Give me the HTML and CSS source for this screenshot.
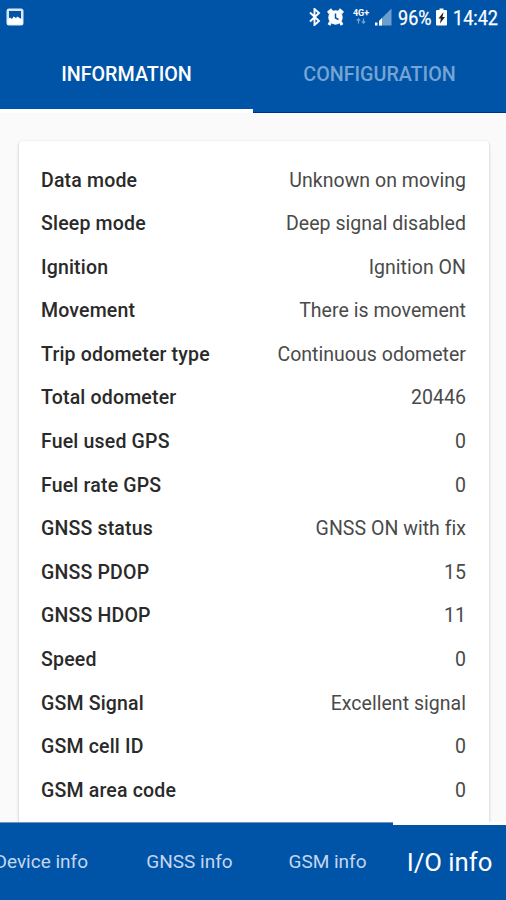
FILE: index.html
```
<!DOCTYPE html>
<html lang="en">
<head>
<meta charset="utf-8">
<meta name="viewport" content="width=device-width">
<title>I/O info</title>
<link rel="stylesheet" href="styles.css">
</head>
<body>
<div class="screen">
  <header class="status">
    <svg class="picture" width="18" height="18" viewBox="0 0 18 18"><rect x=".5" y=".5" width="17" height="17" rx="2.500" fill="#d9e6f8"/><path d="M3 3h12v8H3z" fill="#0054a8"/><path d="M1.500 11.500L4 9.500l2 1.500L7.500 8.500 10 10l1.500-1.500 2 1.500 3 1.500v5h-15z" fill="#fff"/></svg>
    <div class="indicators">
      <svg class="bluetooth" width="12" height="18" viewBox="0 0 12 18"><path d="M1 4.500l9 8.500-4.500 4V1L10 5 1 13.500" fill="none" stroke="#fff" stroke-width="1.900"/></svg>
      <svg class="alarm" width="17" height="18" viewBox="0 0 17 18"><path d="M1 5l4-3.500M16 5l-4-3.500M3.500 14L2 17M13.500 14l1.500 3" stroke="#fff" stroke-width="3"/><circle cx="8.500" cy="9.500" r="7.200" fill="#fff"/><path d="M8.500 5.500v4.500l3 1.500" fill="none" stroke="#0054a8" stroke-width="1.500"/></svg>
      <div class="network"><span class="g">4G+</span><svg width="10" height="6" viewBox="0 0 10 6"><path d="M2.500 5.500V1M.8 2.600L2.500.8l1.700 1.800M7.500.5V5M5.800 3.400l1.700 1.800 1.700-1.800" fill="none" stroke="#6fa3d6" stroke-width="1.200"/></svg></div>
      <svg class="signal" width="18" height="18" viewBox="0 0 18 18"><path d="M5 13L17.500.5v17H5z" fill="#6b9fd0"/><path d="M5 13l3-3v7.500H5z" fill="#fff"/><path d="M1 14.500h2.500v3H1z" fill="#fff"/></svg>
      <span class="battery-text"><span class="narrow">96%</span></span>
      <svg class="battery" width="11" height="18" viewBox="0 0 11 18"><path d="M3.500.5h4V2H10q1 0 1 1v13.500q0 1-1 1H1q-1 0-1-1V3q0-1 1-1h2.500z" fill="#fff"/><path d="M7.500 4L2.500 10.500h2.300L4 15.500l5-6.500H6.500z" fill="#222"/></svg>
      <span class="clock"><span class="narrow">14:42</span></span>
    </div>
  </header>
  <nav class="tabs">
    <div class="tab active"><span>INFORMATION</span></div>
    <div class="tab"><span>CONFIGURATION</span></div>
  </nav>
  <main class="content">
    <section class="card">
      <div class="row"><span class="label">Data mode</span><span class="value">Unknown on moving</span></div>
      <div class="row"><span class="label">Sleep mode</span><span class="value">Deep signal disabled</span></div>
      <div class="row"><span class="label">Ignition</span><span class="value">Ignition ON</span></div>
      <div class="row"><span class="label">Movement</span><span class="value">There is movement</span></div>
      <div class="row"><span class="label">Trip odometer type</span><span class="value">Continuous odometer</span></div>
      <div class="row"><span class="label">Total odometer</span><span class="value">20446</span></div>
      <div class="row"><span class="label">Fuel used GPS</span><span class="value">0</span></div>
      <div class="row"><span class="label">Fuel rate GPS</span><span class="value">0</span></div>
      <div class="row"><span class="label">GNSS status</span><span class="value">GNSS ON with fix</span></div>
      <div class="row"><span class="label">GNSS PDOP</span><span class="value">15</span></div>
      <div class="row"><span class="label">GNSS HDOP</span><span class="value">11</span></div>
      <div class="row"><span class="label">Speed</span><span class="value">0</span></div>
      <div class="row"><span class="label">GSM Signal</span><span class="value">Excellent signal</span></div>
      <div class="row"><span class="label">GSM cell ID</span><span class="value">0</span></div>
      <div class="row"><span class="label">GSM area code</span><span class="value">0</span></div>
    </section>
  </main>
  <nav class="bottom">
    <div class="item device"><span>Device info</span></div>
    <div class="item gnss"><span>GNSS info</span></div>
    <div class="item gsm"><span>GSM info</span></div>
    <div class="item current"><span>I/O info</span></div>
  </nav>
</div>
</body>
</html>
```
FILE: styles.css
```
* { box-sizing: border-box; }
body { margin: 0; font-family: Roboto, "Liberation Sans", sans-serif; }
.screen { width: 506px; height: 900px; overflow: hidden; display: flex; flex-direction: column; background: #fafafa; }
.status { height: 36px; flex: none; display: flex; align-items: flex-start; justify-content: space-between; padding: 8px 7px 0 6px; background: #0054a8; color: #fff; }
.status svg { display: block; flex: none; }
.indicators { display: flex; align-items: flex-start; height: 20px; }
.alarm { margin-left: 6px; }
.network { width: 18px; margin: 1px 4px 0 8px; display: flex; flex-direction: column; align-items: center; }
.g { font-size: 9px; line-height: 9px; font-weight: 700; }
.battery-text, .clock { font-size: 21px; line-height: 20px; white-space: nowrap; -webkit-text-stroke: .25px #fff; }
.battery-text { width: 33px; margin-left: 6px; }
.clock { width: 46px; margin-left: 6px; }
.battery { margin-left: 5px; }
.narrow { display: inline-block; transform: scaleX(.86); transform-origin: left; }
.tabs { height: 77px; flex: none; display: flex; background: #0054a8; }
.tab { flex: 1; display: flex; justify-content: center; padding-top: 27px; font-size: 19.700px; line-height: 24px; font-weight: 500; color: #76a4d3; border-bottom: 1px solid #002f8f; }
.tab.active { color: #fff; border-bottom: 4px solid #fff; }
.content { flex: 1; min-height: 0; padding: 28px 17px 0 19px; overflow: hidden; }
.card { height: 750px; padding: 17.500px 23px 0 22px; background: #fff; border-radius: 4px; box-shadow: 0 1px 3px rgba(0,0,0,.25); }
.row { height: 43.600px; display: flex; justify-content: space-between; font-size: 19.500px; line-height: 44px; white-space: nowrap; }
.label { font-weight: 500; color: #2a2a2a; letter-spacing: .18px; }
.value { font-weight: 400; color: #4a4a4a; letter-spacing: .03px; }
.bottom { height: 78px; flex: none; display: flex; background: #0054a8; color: #c4d6ee; font-size: 19px; line-height: 24px; white-space: nowrap; }
.item { padding-top: 27px; border-top: 1px solid #6e94c8; display: flex; justify-content: center; }
.device { width: 117px; justify-content: flex-end; padding-right: 29px; }
.gnss { width: 145px; }
.gsm { width: 131px; }
.current { width: 113px; border-top: 3px solid #fff; padding-top: 25px; color: #fff; font-size: 25.700px; }
```
